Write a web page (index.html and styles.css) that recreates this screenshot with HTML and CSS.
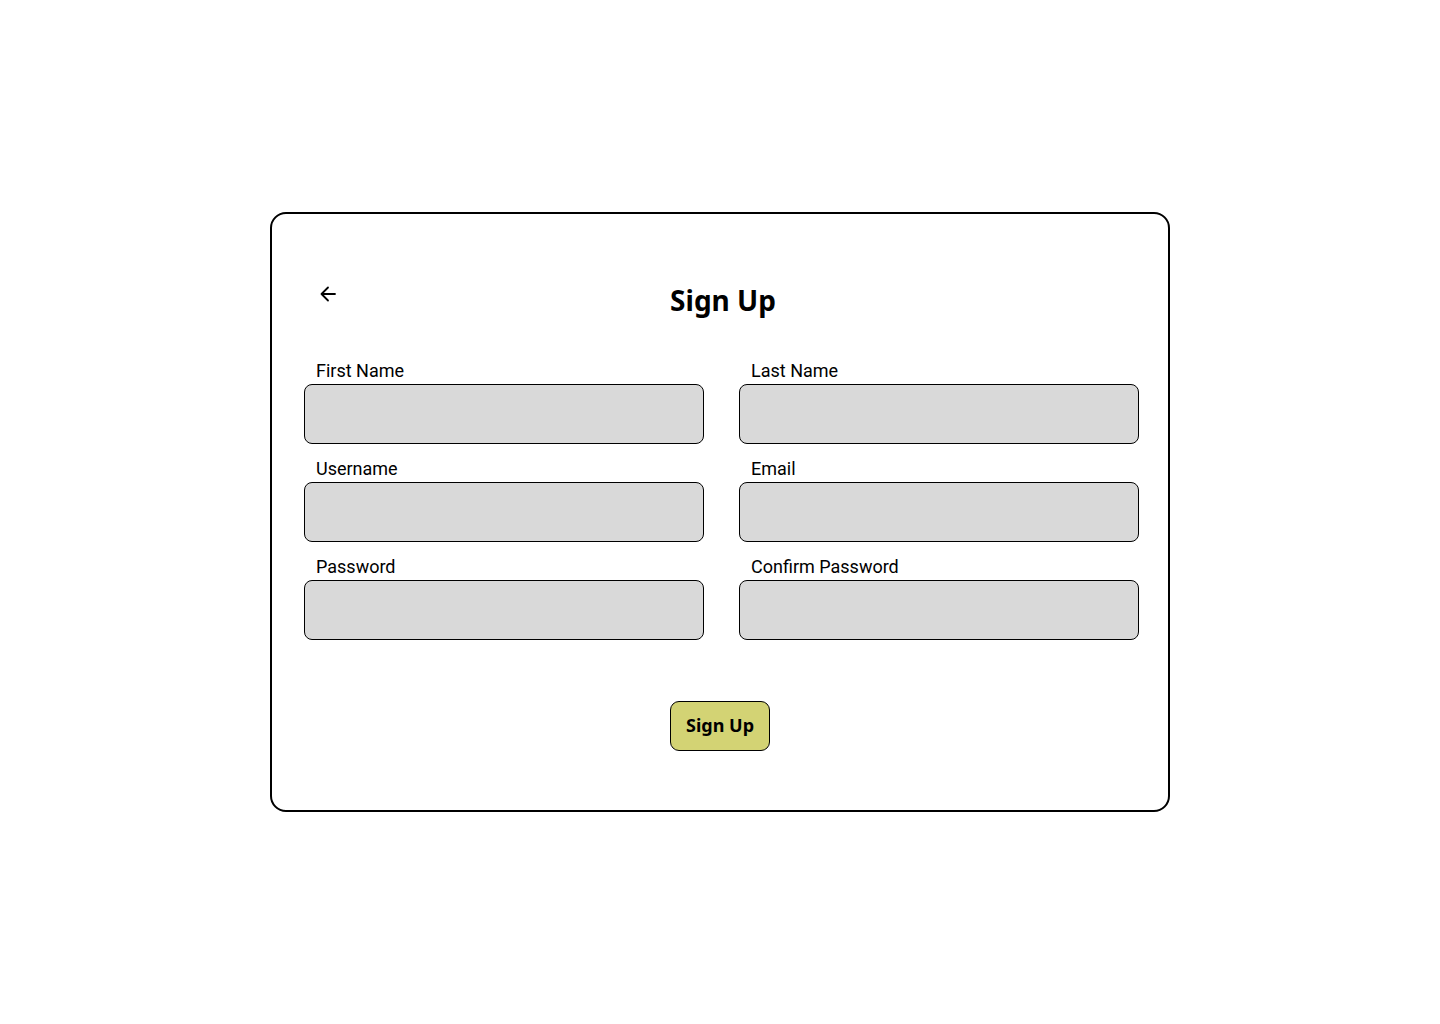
FILE: index.html
```html
<!DOCTYPE html>
<html>
<head>
<meta charset="utf-8">
<link rel="stylesheet" href="styles.css">
</head>
<body>
<div class="page">
  <div class="card">
    <div class="header">
      <button class="back" aria-label="Back">
        <svg width="20" height="20" viewBox="0 0 20 20" fill="none" stroke="#000" stroke-width="1.8" stroke-linecap="round" stroke-linejoin="round"><path d="M17 10H3.5M10 3.5L3.5 10L10 16.5"/></svg>
      </button>
      <h1 class="title">Sign Up</h1>
      <span class="spacer"></span>
    </div>
    <div class="fields">
      <div class="field"><label class="label">First Name</label><div class="input"></div></div>
      <div class="field"><label class="label">Last Name</label><div class="input"></div></div>
      <div class="field"><label class="label">Username</label><div class="input"></div></div>
      <div class="field"><label class="label">Email</label><div class="input"></div></div>
      <div class="field"><label class="label">Password</label><div class="input"></div></div>
      <div class="field"><label class="label">Confirm Password</label><div class="input"></div></div>
    </div>
    <div class="actions">
      <button class="submit">Sign Up</button>
    </div>
  </div>
</div>
</body>
</html>
```
FILE: styles.css
```css
* { box-sizing: border-box; }
html, body { margin: 0; padding: 0; background: #fff; }
body { font-family: "Noto Sans", sans-serif; color: #000; }
.page {
  width: 1440px;
  height: 1024px;
  display: flex;
  align-items: center;
  justify-content: center;
}
.card {
  width: 900px;
  height: 600px;
  border: 2px solid #000;
  border-radius: 16px;
  padding: 62px 29px 0 32px;
  display: flex;
  flex-direction: column;
}
.header {
  display: grid;
  grid-template-columns: 40px 1fr 40px;
  align-items: center;
  height: 48px;
}
.back {
  background: none;
  border: 0;
  padding: 0;
  margin-left: 14px;
  margin-top: -13px;
  width: 20px;
  height: 20px;
  display: flex;
  cursor: pointer;
}
.title {
  margin: 0 0 0 3px;
  text-align: center;
  font-size: 28px;
  font-weight: 700;
  line-height: 48px;
}
.fields {
  margin-top: 36px;
  display: grid;
  grid-template-columns: 400px 400px;
  column-gap: 35px;
  row-gap: 14px;
}
.field { display: flex; flex-direction: column; }
.label {
  font-family: Roboto, "Noto Sans", sans-serif;
  font-size: 18px;
  line-height: 22px;
  padding-left: 12px;
  margin-bottom: 2px;
}
.input {
  height: 60px;
  background: #d9d9d9;
  border: 1px solid #000;
  border-radius: 8px;
}
.actions {
  display: flex;
  justify-content: center;
  margin-top: 61px;
}
.submit {
  width: 100px;
  height: 50px;
  background: #d3d374;
  border: 1px solid #000;
  border-radius: 9px;
  font-family: "Noto Sans", sans-serif;
  font-weight: 700;
  font-size: 18px;
  line-height: 20px;
  color: #000;
  padding: 0 0 3px;
  margin-left: -3px;
}
```
